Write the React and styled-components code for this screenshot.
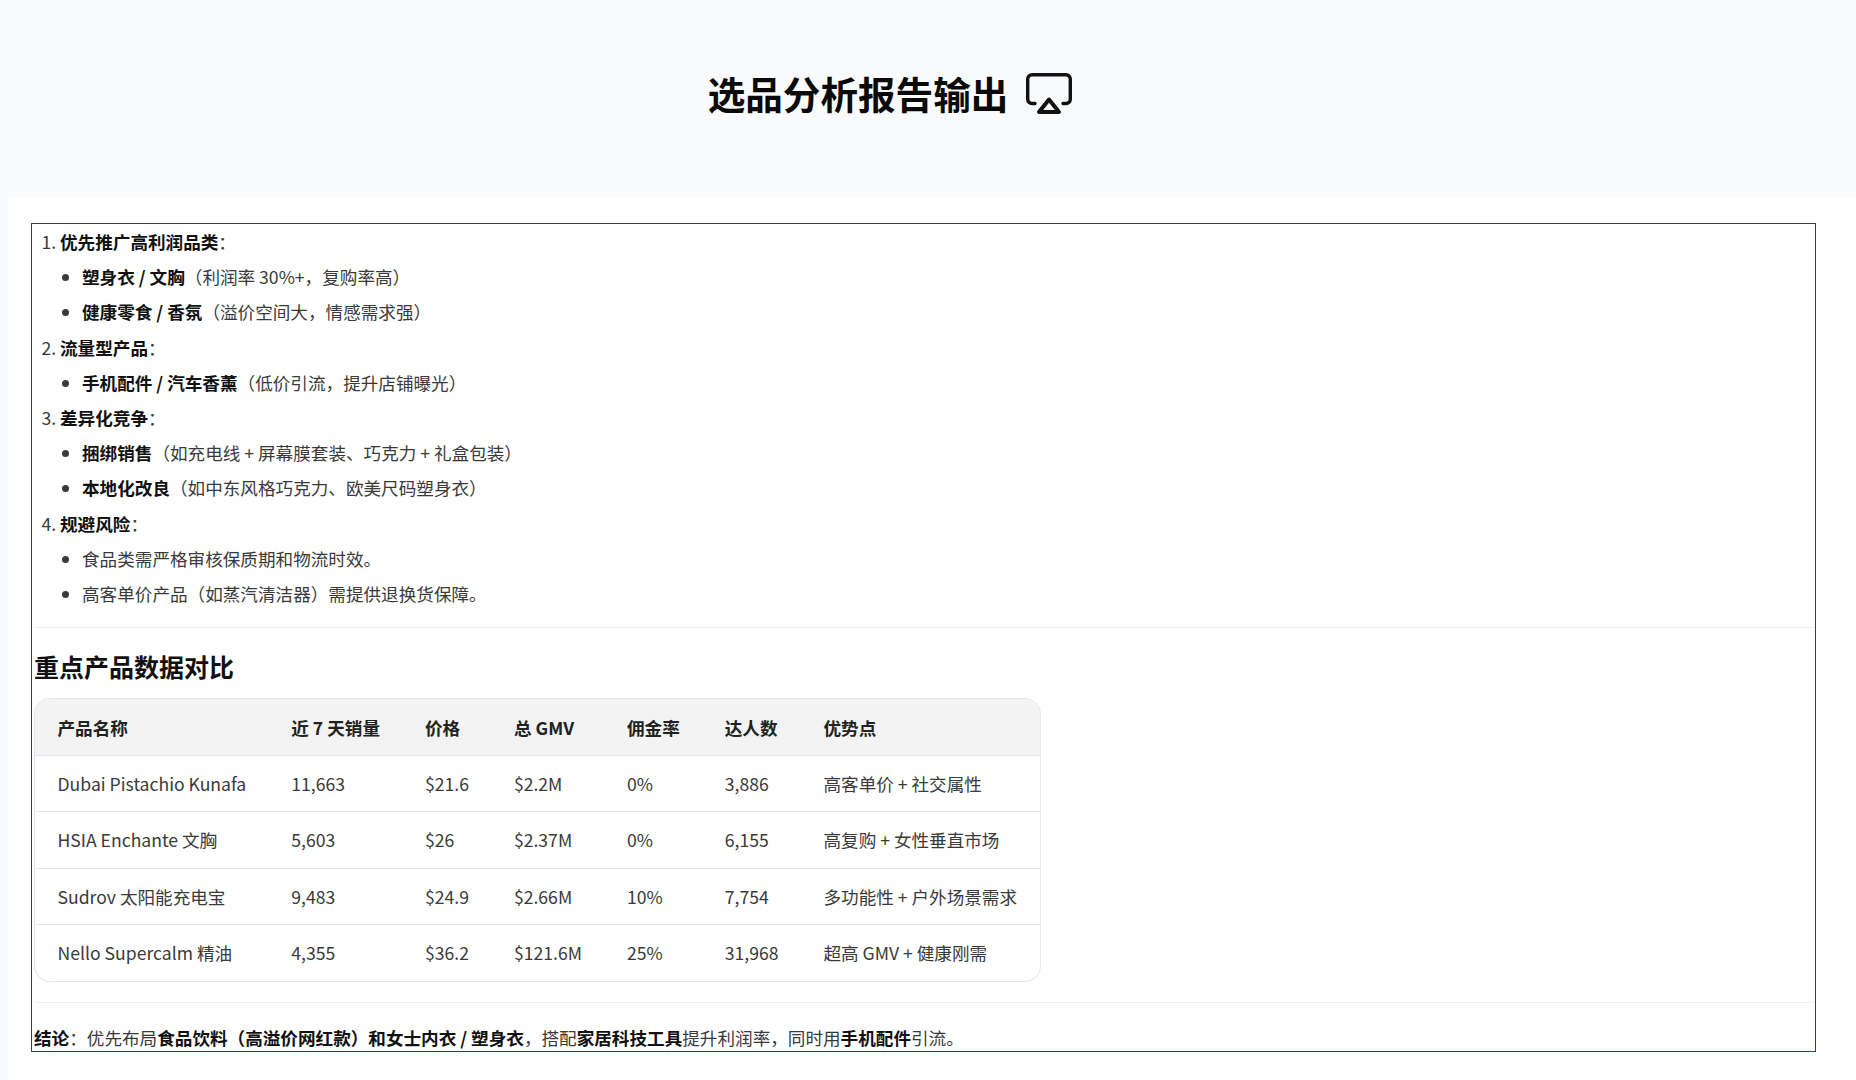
import React from 'react'
import styled, { createGlobalStyle } from 'styled-components'

const GlobalStyle = createGlobalStyle`
	html, body {
		margin: 0;
		padding: 0;
		background: #f9fafc;
	}

	body {
		font-family: "Noto Sans CJK SC", "Noto Sans", sans-serif;
		font-size: 17.6px;
		color: #3a3a3a;
	}
`

const PRODUCTS = [
	['Dubai Pistachio Kunafa', '11,663', '$21.6', '$2.2M', '0%', '3,886', '高客单价 + 社交属性'],
	['HSIA Enchante 文胸', '5,603', '$26', '$2.37M', '0%', '6,155', '高复购 + 女性垂直市场'],
	['Sudrov 太阳能充电宝', '9,483', '$24.9', '$2.66M', '10%', '7,754', '多功能性 + 户外场景需求'],
	['Nello Supercalm 精油', '4,355', '$36.2', '$121.6M', '25%', '31,968', '超高 GMV + 健康刚需']
]

const COLUMNS = ['产品名称', '近 7 天销量', '价格', '总 GMV', '佣金率', '达人数', '优势点']

const AirplayIcon = () => (
	<svg width='46' height='41' viewBox='0 0 46 41' fill='none' stroke='#111' strokeWidth='3.4' strokeLinejoin='round' strokeLinecap='round'>
		<path d='M9 30.5H6a4.3 4.3 0 0 1-4.3-4.3V6A4.3 4.3 0 0 1 6 1.7H40A4.3 4.3 0 0 1 44.3 6V26.2A4.3 4.3 0 0 1 40 30.5H37'/>
		<path d='M23 26.5 33 39H13Z' strokeWidth='4'/>
	</svg>
)

const App = () => (
	<>
		<GlobalStyle/>
		<Header>
			<Title>选品分析报告输出</Title>
			<AirplayIcon/>
		</Header>
		<Panel>
			<Report>
				<Steps>
					<li>
						<strong>优先推广高利润品类</strong>：
						<Bullets>
							<li><strong>塑身衣 / 文胸</strong>（利润率 30%+，复购率高）</li>
							<li><strong>健康零食 / 香氛</strong>（溢价空间大，情感需求强）</li>
						</Bullets>
					</li>
					<li>
						<strong>流量型产品</strong>：
						<Bullets>
							<li><strong>手机配件 / 汽车香薰</strong>（低价引流，提升店铺曝光）</li>
						</Bullets>
					</li>
					<li>
						<strong>差异化竞争</strong>：
						<Bullets>
							<li><strong>捆绑销售</strong>（如充电线 + 屏幕膜套装、巧克力 + 礼盒包装）</li>
							<li><strong>本地化改良</strong>（如中东风格巧克力、欧美尺码塑身衣）</li>
						</Bullets>
					</li>
					<li>
						<strong>规避风险</strong>：
						<Bullets>
							<li>食品类需严格审核保质期和物流时效。</li>
							<li>高客单价产品（如蒸汽清洁器）需提供退换货保障。</li>
						</Bullets>
					</li>
				</Steps>
				<Divider/>
				<Heading>重点产品数据对比</Heading>
				<TableCard>
					<Table>
						<thead>
							<tr>
								{COLUMNS.map(col => <Th key={col}>{col}</Th>)}
							</tr>
						</thead>
						<tbody>
							{PRODUCTS.map(row => (
								<tr key={row[0]}>
									{row.map((cell, i) => <Td key={i}>{cell}</Td>)}
								</tr>
							))}
						</tbody>
					</Table>
				</TableCard>
				<Divider/>
				<Conclusion>
					<strong>结论</strong>：优先布局<strong>食品饮料（高溢价网红款）和女士内衣 / 塑身衣</strong>，搭配<strong>家居科技工具</strong>提升利润率，同时用<strong>手机配件</strong>引流。
				</Conclusion>
			</Report>
		</Panel>
	</>
)

export default App

const Header = styled.header`
	display: flex;
	align-items: center;
	justify-content: center;
	gap: 18px;
	height: 197px;
	padding-right: 76px;
	padding-bottom: 10px;
	box-sizing: border-box;
`

const Title = styled.h1`
	margin: 0;
	font-size: 37.6px;
	font-weight: 700;
	line-height: 1.3;
	color: #0a0a0a;
`

const Panel = styled.main`
	margin-left: 8px;
	padding: 26px 0 29px 23px;
	min-height: 854px;
	box-sizing: border-box;
	background: #fff;
`

const Report = styled.section`
	width: 1785px;
	height: 829px;
	box-sizing: border-box;
	border: 1px solid #6b2a2f;
	padding: 0 1px 0 2px;

	strong {
		color: #111;
		font-weight: 700;
	}
`

const Steps = styled.ol`
	margin: 0;
	padding: 0 0 0 26px;
	line-height: 35.2px;
`

const Bullets = styled.ul`
	margin: 0;
	padding: 0 0 0 22px;
	list-style-type: disc;
`

const Divider = styled.hr`
	margin: 20px 0 22px;
	border: 0;
	border-top: 1px solid #f0f0f0;

	ol + & {
		margin: 16px 0 22px;
	}
`

const Heading = styled.h3`
	margin: 0 0 16px;
	font-size: 25px;
	font-weight: 700;
	line-height: 32px;
	color: #111;
`

const TableCard = styled.div`
	width: fit-content;
	border: 1px solid #e2e6ee;
	border-radius: 16px;
	overflow: hidden;
`

const Table = styled.table`
	border-collapse: collapse;
	white-space: nowrap;
`

const Th = styled.th`
	height: 56.3px;
	padding: 0 22.5px;
	box-sizing: border-box;
	background: #f3f3f3;
	border-bottom: 1px solid #e2e6ee;
	text-align: left;
	font-weight: 700;
	color: #222;
`

const Td = styled.td`
	height: 56.3px;
	padding: 0 22.5px;
	box-sizing: border-box;
	border-bottom: 1px solid #e2e6ee;
	color: #3a3a3a;

	tr:last-child & {
		border-bottom: 0;
	}
`

const Conclusion = styled.p`
	margin: 0;
	line-height: 26px;
`
